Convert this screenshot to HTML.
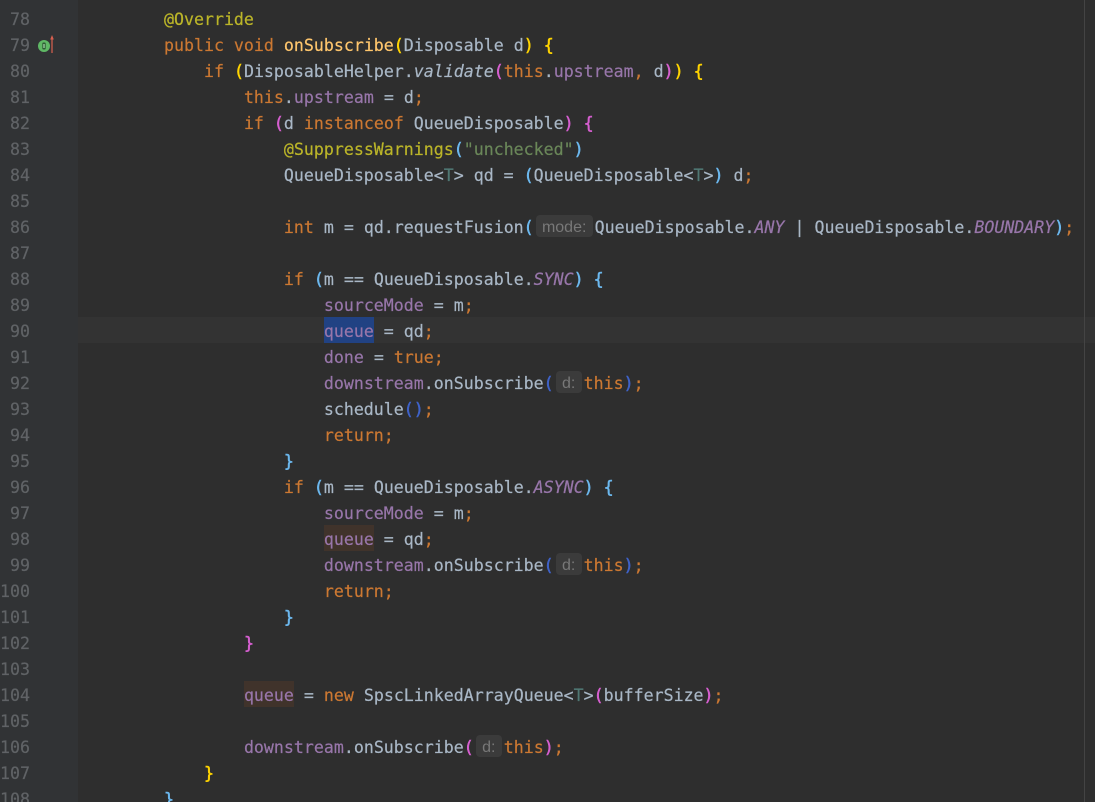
<!DOCTYPE html>
<html>
<head>
<meta charset="utf-8">
<style>
html,body{margin:0;padding:0;background:#2e2e2e;}
#r{position:relative;width:1095px;height:802px;overflow:hidden;background:#2e2e2e;font-family:"DejaVu Sans Mono","Liberation Mono",monospace;font-size:16.6px;color:#a9b7c6;-webkit-text-stroke:.2px currentColor;}
#g{position:absolute;left:0;top:0;width:78px;height:802px;background:#313335;}
#m{position:absolute;left:1084px;top:0;width:1px;height:802px;background:#444;}
#c{position:absolute;left:78px;top:317px;width:1017px;height:26px;background:#333333;}
.bgs{position:absolute;width:50px;height:26px;}
.n{position:absolute;left:0;width:30px;margin-top:2px;text-align:right;color:#606366;height:26px;line-height:26px;white-space:pre;}
.l{position:absolute;left:164px;margin-top:2px;height:26px;line-height:26px;white-space:pre;}
.k{color:#cc7832}.a{color:#bbb529}.f{color:#ffc66d}.v{color:#9876aa}.s{color:#6a8759}.t{color:#507874}
.i{font-style:italic}
.y{color:#ffd400;-webkit-text-stroke:.5px currentColor}.p{color:#d65fd0;-webkit-text-stroke:.5px currentColor}.b{color:#6cb8ee;-webkit-text-stroke:.5px currentColor}.d{color:#3f62c8;-webkit-text-stroke:.5px currentColor}
.h{display:inline-block;position:relative;height:26px;vertical-align:top;}
.h b{position:absolute;top:0;left:2px;height:22px;right:2px;background:#3b3b3b;border-radius:4px;font:normal 16px/25px "Liberation Sans",sans-serif;color:#787878;text-align:center;-webkit-text-stroke:0;overflow:hidden;}
</style>
</head>
<body>
<div id="r">
<div id="g"></div>
<div id="c"></div>
<div id="m"></div>
<div class="bgs" style="left:324px;top:317px;background:#214283"></div>
<div class="bgs" style="left:324px;top:525px;background:#40332b"></div>
<div class="bgs" style="left:244px;top:681px;background:#40332b"></div>

<div class="n" style="top:5px">78</div>
<div class="n" style="top:31px">79</div>
<div class="n" style="top:57px">80</div>
<div class="n" style="top:83px">81</div>
<div class="n" style="top:109px">82</div>
<div class="n" style="top:135px">83</div>
<div class="n" style="top:161px">84</div>
<div class="n" style="top:187px">85</div>
<div class="n" style="top:213px">86</div>
<div class="n" style="top:239px">87</div>
<div class="n" style="top:265px">88</div>
<div class="n" style="top:291px">89</div>
<div class="n" style="top:317px">90</div>
<div class="n" style="top:343px">91</div>
<div class="n" style="top:369px">92</div>
<div class="n" style="top:395px">93</div>
<div class="n" style="top:421px">94</div>
<div class="n" style="top:447px">95</div>
<div class="n" style="top:473px">96</div>
<div class="n" style="top:499px">97</div>
<div class="n" style="top:525px">98</div>
<div class="n" style="top:551px">99</div>
<div class="n" style="top:577px">100</div>
<div class="n" style="top:603px">101</div>
<div class="n" style="top:629px">102</div>
<div class="n" style="top:655px">103</div>
<div class="n" style="top:681px">104</div>
<div class="n" style="top:707px">105</div>
<div class="n" style="top:733px">106</div>
<div class="n" style="top:759px">107</div>
<div class="n" style="top:785px">108</div>

<svg style="position:absolute;left:36px;top:34px" width="20" height="20" viewBox="0 0 20 20">
<circle cx="8" cy="12" r="6" fill="#5fb865"/>
<rect x="6.3" y="8.5" width="3.4" height="7" rx="1" fill="#2f5c35"/>
<rect x="7.4" y="10" width="1.2" height="4" fill="#a8dcae"/>
<path d="M16 19V3" stroke="#d9604f" stroke-width="1.2" fill="none"/>
<path d="M14.2 5.5L16 1L17.8 5.5Z" fill="#d9604f"/>
</svg>

<div class="l" style="top:5px"><span class="a">@Override</span></div>
<div class="l" style="top:31px"><span class="k">public void </span><span class="f">onSubscribe</span><span class="y">(</span>Disposable d<span class="y">)</span> <span class="y">{</span></div>
<div class="l" style="top:57px">    <span class="k">if </span><span class="y">(</span>DisposableHelper.<span class="i">validate</span><span class="p">(</span><span class="k">this</span>.<span class="v">upstream</span><span class="k">,</span> d<span class="p">)</span><span class="y">)</span> <span class="y">{</span></div>
<div class="l" style="top:83px">        <span class="k">this</span>.<span class="v">upstream</span> = d<span class="k">;</span></div>
<div class="l" style="top:109px">        <span class="k">if </span><span class="p">(</span>d <span class="k">instanceof</span> QueueDisposable<span class="p">)</span> <span class="p">{</span></div>
<div class="l" style="top:135px">            <span class="a">@SuppressWarnings</span><span class="b">(</span><span class="s">"unchecked"</span><span class="b">)</span></div>
<div class="l" style="top:161px">            QueueDisposable&lt;<span class="t">T</span>&gt; qd = <span class="b">(</span>QueueDisposable&lt;<span class="t">T</span>&gt;<span class="b">)</span> d<span class="k">;</span></div>
<div class="l" style="top:213px">            <span class="k">int</span> m = qd.requestFusion<span class="b">(</span><span class="h" style="width:61px"><b>mode:</b></span>QueueDisposable.<span class="v i">ANY</span> | QueueDisposable.<span class="v i">BOUNDARY</span><span class="b">)</span><span class="k">;</span></div>
<div class="l" style="top:265px">            <span class="k">if </span><span class="b">(</span>m == QueueDisposable.<span class="v i">SYNC</span><span class="b">)</span> <span class="b">{</span></div>
<div class="l" style="top:291px">                <span class="v">sourceMode</span> = m<span class="k">;</span></div>
<div class="l" style="top:317px">                <span class="v">queue</span> = qd<span class="k">;</span></div>
<div class="l" style="top:343px">                <span class="v">done</span> = <span class="k">true;</span></div>
<div class="l" style="top:369px">                <span class="v">downstream</span>.onSubscribe<span class="d">(</span><span class="h" style="width:30px"><b>d:</b></span><span class="k">this</span><span class="d">)</span><span class="k">;</span></div>
<div class="l" style="top:395px">                schedule<span class="d">()</span><span class="k">;</span></div>
<div class="l" style="top:421px">                <span class="k">return;</span></div>
<div class="l" style="top:447px">            <span class="b">}</span></div>
<div class="l" style="top:473px">            <span class="k">if </span><span class="b">(</span>m == QueueDisposable.<span class="v i">ASYNC</span><span class="b">)</span> <span class="b">{</span></div>
<div class="l" style="top:499px">                <span class="v">sourceMode</span> = m<span class="k">;</span></div>
<div class="l" style="top:525px">                <span class="v">queue</span> = qd<span class="k">;</span></div>
<div class="l" style="top:551px">                <span class="v">downstream</span>.onSubscribe<span class="d">(</span><span class="h" style="width:30px"><b>d:</b></span><span class="k">this</span><span class="d">)</span><span class="k">;</span></div>
<div class="l" style="top:577px">                <span class="k">return;</span></div>
<div class="l" style="top:603px">            <span class="b">}</span></div>
<div class="l" style="top:629px">        <span class="p">}</span></div>
<div class="l" style="top:681px">        <span class="v">queue</span> = <span class="k">new </span>SpscLinkedArrayQueue&lt;<span class="t">T</span>&gt;<span class="p">(</span>bufferSize<span class="p">)</span><span class="k">;</span></div>
<div class="l" style="top:733px">        <span class="v">downstream</span>.onSubscribe<span class="p">(</span><span class="h" style="width:30px"><b>d:</b></span><span class="k">this</span><span class="p">)</span><span class="k">;</span></div>
<div class="l" style="top:759px">    <span class="y">}</span></div>
<div class="l" style="top:785px"><span class="b">}</span></div>
</div>
</body>
</html>
